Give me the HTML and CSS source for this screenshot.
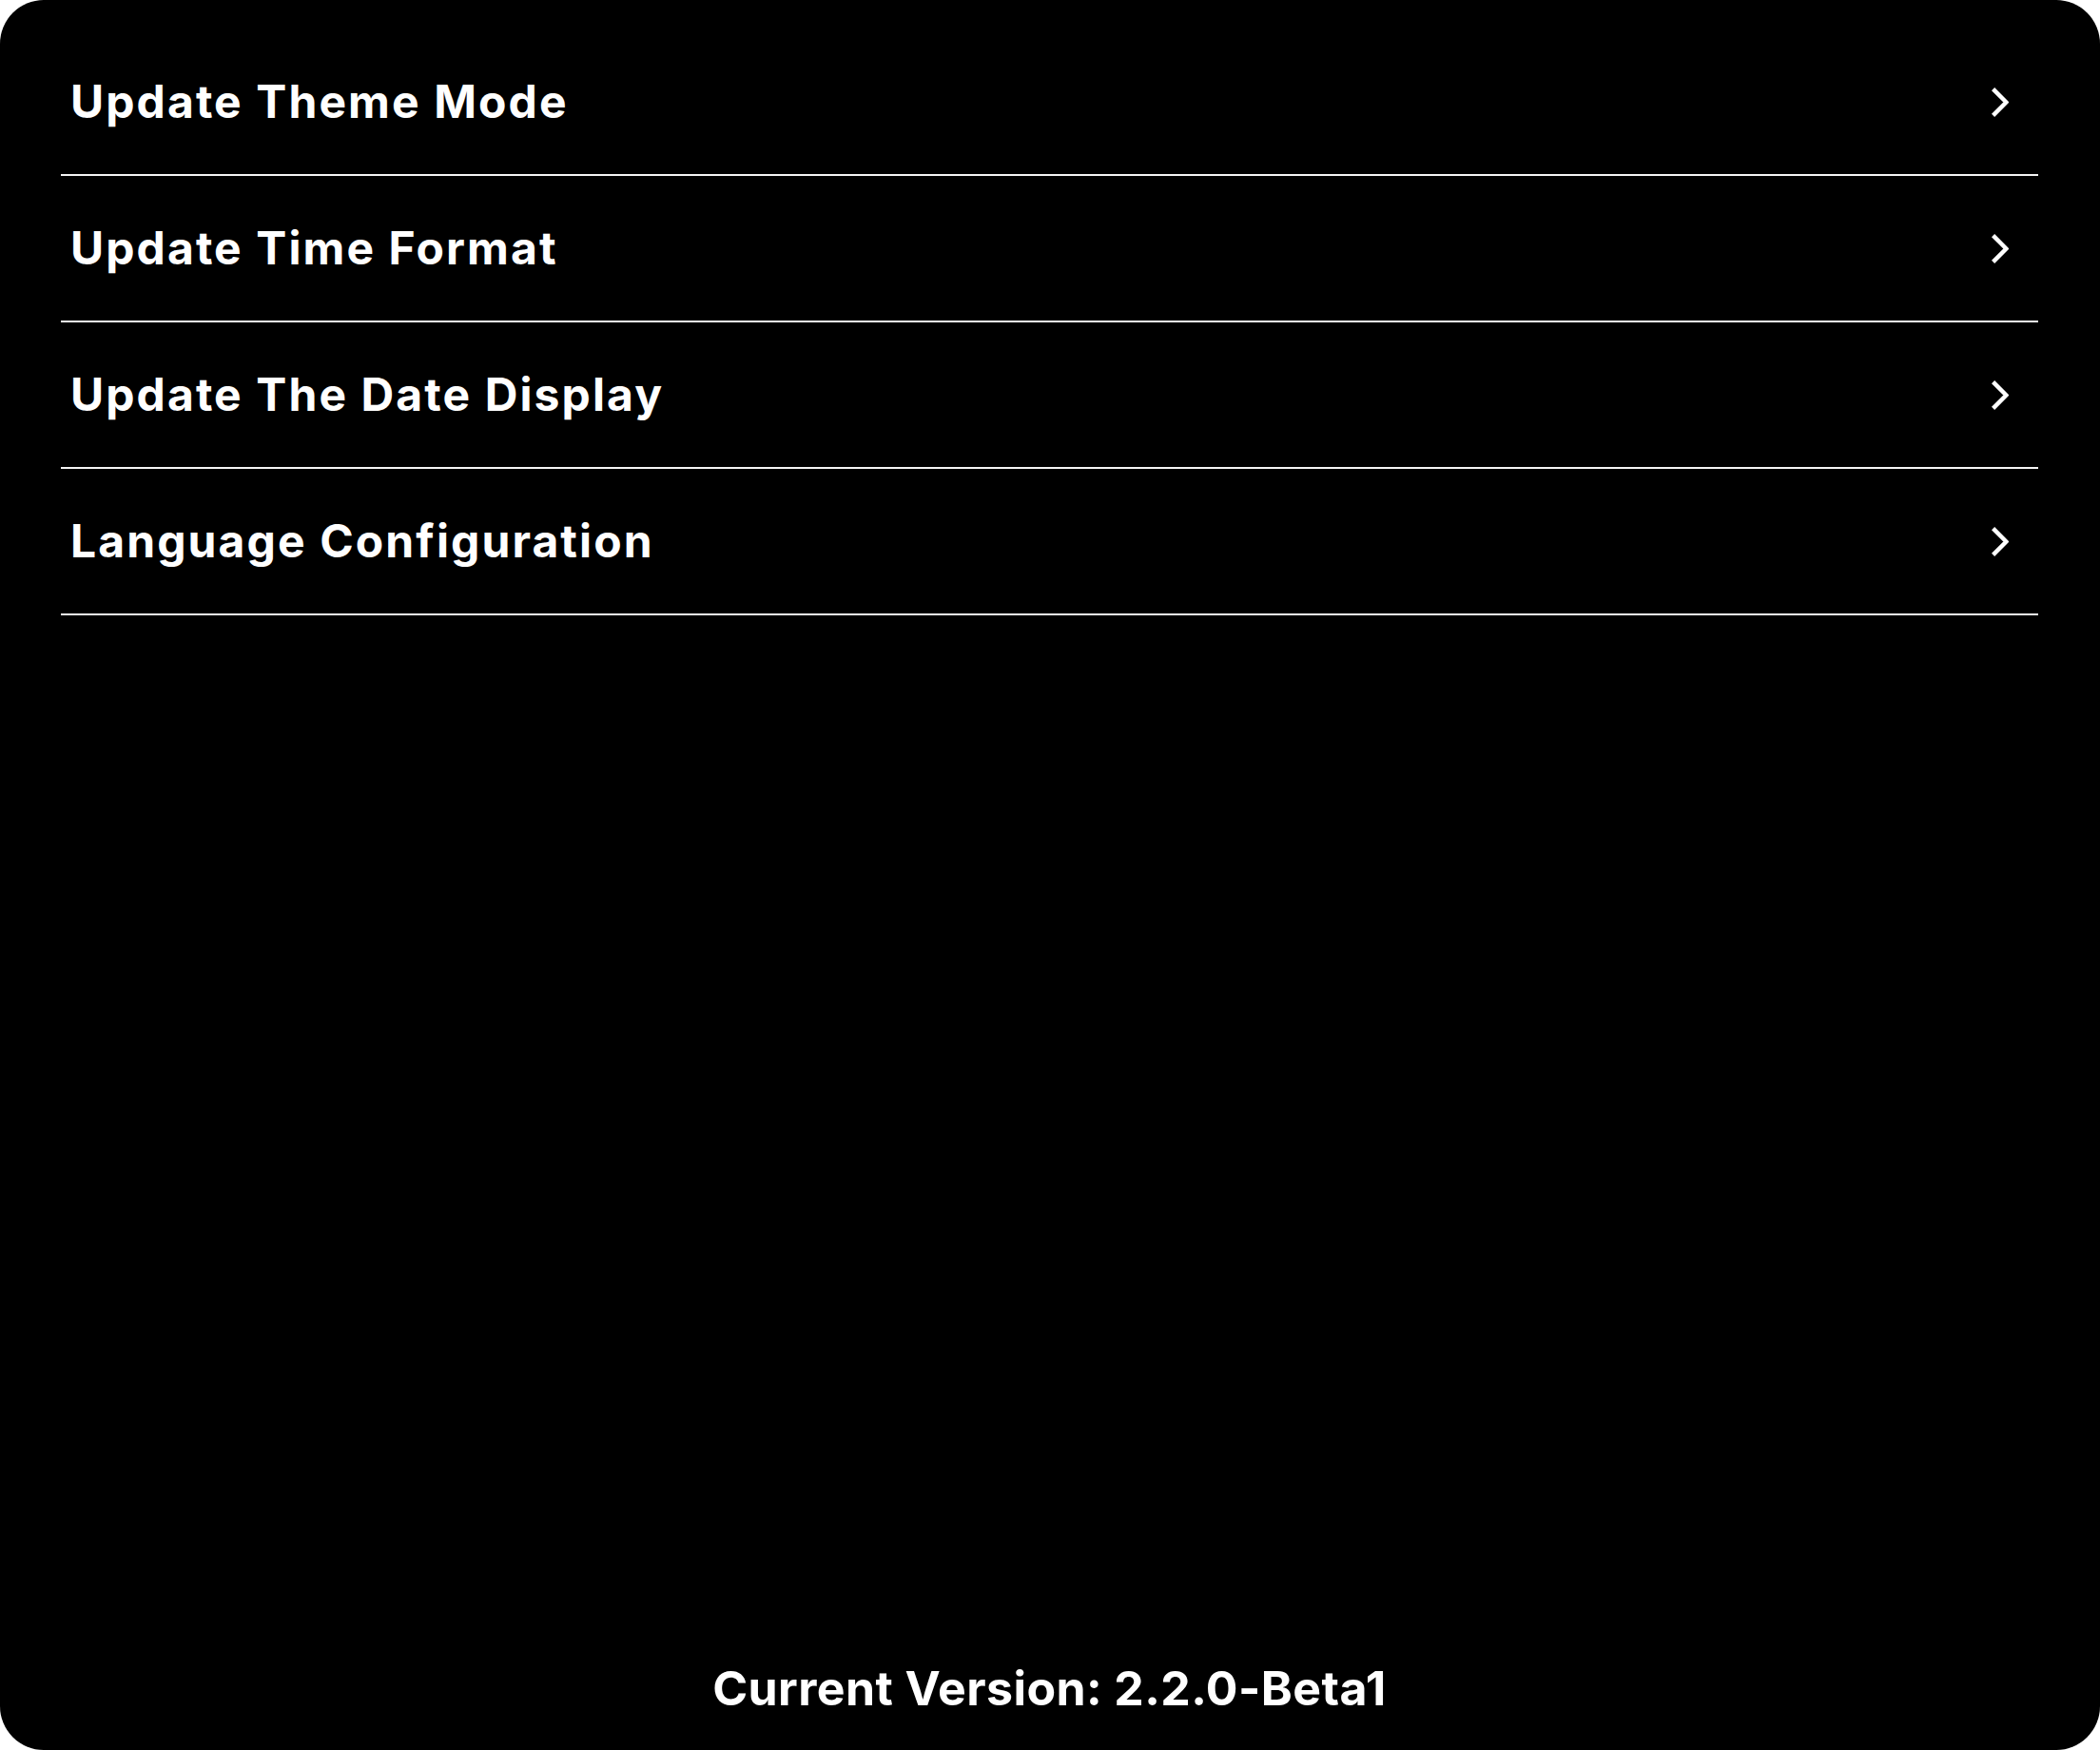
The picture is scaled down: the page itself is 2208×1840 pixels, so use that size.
FILE: index.html
```html
<!DOCTYPE html>
<html lang="en">
<head>
<meta charset="utf-8">
<title>Settings</title>
<link rel="stylesheet" href="styles.css">
</head>
<body>
<div class="panel">
  <ul class="menu">
    <li class="row"><span class="label">Update Theme Mode</span><svg class="chev" viewBox="0 0 18 31" width="18" height="31"><polyline points="1.6,1.6 15.4,15.5 1.6,29.4"/></svg></li>
    <li class="row"><span class="label">Update Time Format</span><svg class="chev" viewBox="0 0 18 31" width="18" height="31"><polyline points="1.6,1.6 15.4,15.5 1.6,29.4"/></svg></li>
    <li class="row"><span class="label">Update The Date Display</span><svg class="chev" viewBox="0 0 18 31" width="18" height="31"><polyline points="1.6,1.6 15.4,15.5 1.6,29.4"/></svg></li>
    <li class="row"><span class="label">Language Configuration</span><svg class="chev" viewBox="0 0 18 31" width="18" height="31"><polyline points="1.6,1.6 15.4,15.5 1.6,29.4"/></svg></li>
  </ul>
  <div class="version">Current Version: 2.2.0-Beta1</div>
</div>
</body>
</html>
```
FILE: styles.css
```css
html, body {
  margin: 0;
  padding: 0;
  background: #fff;
}
.panel {
  box-sizing: border-box;
  width: 2208px;
  height: 1840px;
  background: #000;
  border-radius: 46px;
  padding: 31px 65px 0 64px;
  display: flex;
  flex-direction: column;
  font-family: "Inter", "Liberation Sans", sans-serif;
  color: #fff;
}
.menu {
  list-style: none;
  margin: 0;
  padding: 0;
}
.row {
  box-sizing: border-box;
  height: 154px;
  border-bottom: 2px solid #f4f4f4;
  display: flex;
  align-items: center;
  justify-content: space-between;
  padding: 0 31px 0 10px;
}
.label {
  font-size: 48px;
  font-weight: 700;
  letter-spacing: 2.1px;
  line-height: 1;
}
.chev {
  display: block;
  fill: none;
  stroke: #fff;
  stroke-width: 4.4;
  stroke-linejoin: miter;
  stroke-linecap: butt;
}
.version {
  margin-top: auto;
  text-align: center;
  font-size: 50px;
  font-weight: 700;
  letter-spacing: 0.4px;
  line-height: 1;
  padding-bottom: 40px;
}
```
